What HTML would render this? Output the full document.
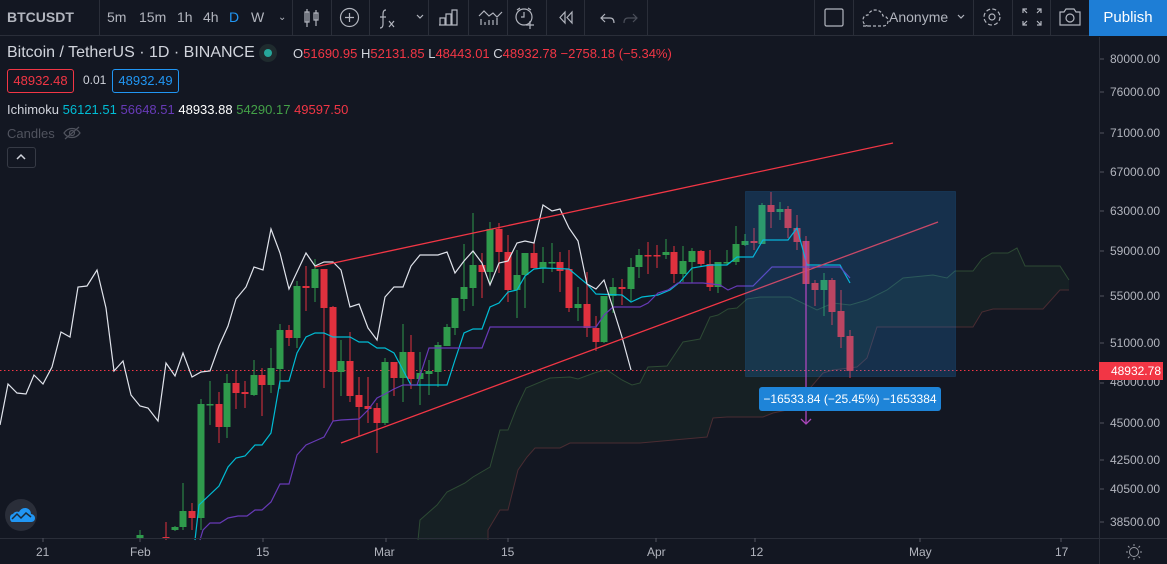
<!DOCTYPE html>
<html><head><meta charset="utf-8"><style>
body{margin:0;width:1167px;height:564px;background:#131722;overflow:hidden;font-family:"Liberation Sans",sans-serif;position:relative}
.tb{position:absolute;left:0;top:0;width:1167px;height:36px;background:#131722;border-bottom:1px solid #2a2e39;box-sizing:border-box}
.t{position:absolute;color:#b2b5be;font-size:14px;top:9px}
.sep{position:absolute;top:0;width:1px;height:36px;background:#2a2e39}
.lg{position:absolute;font-size:13px;white-space:nowrap}
.ax{position:absolute;font-size:12px;color:#b2b5be}
</style></head><body>
<svg width="1167" height="564" style="position:absolute;left:0;top:0" id="ch">
<rect x="0" y="37" width="1167" height="527" fill="#131722"/>
</svg>
<div class="tb">
<div class="t" style="left:7px;font-weight:bold;font-size:14px">BTCUSDT</div>
<div class="sep" style="left:99px"></div>
<div class="t" style="left:107px">5m</div><div class="t" style="left:139px">15m</div><div class="t" style="left:177px">1h</div><div class="t" style="left:203px">4h</div><div class="t" style="left:229px;color:#2196f3">D</div><div class="t" style="left:251px">W</div>
<div class="t" style="left:278px;font-size:10px;top:12px">&#8964;</div>
<div class="sep" style="left:292px"></div><div class="sep" style="left:331px"></div><div class="sep" style="left:369px"></div><div class="sep" style="left:428px"></div><div class="sep" style="left:468px"></div><div class="sep" style="left:507px"></div><div class="sep" style="left:546px"></div><div class="sep" style="left:584px"></div><div class="sep" style="left:647px"></div>
<div class="sep" style="left:814px"></div><div class="sep" style="left:853px"></div><div class="sep" style="left:973px"></div><div class="sep" style="left:1012px"></div><div class="sep" style="left:1050px"></div>
<svg width="1167" height="36" style="position:absolute;left:0;top:0" fill="none" stroke="#b2b5be" stroke-width="1.2">
<path d="M307 9v18M305 12h4v10h-4zM316 10v16M314 13h4v7h-4z"/>
<circle cx="349.5" cy="17.5" r="9"/><path d="M345 17.5h9M349.5 13v9"/>
<path d="M386 10c-3 0-3 3-3 5v9c0 3-1 4-3 4M380 17h6M389 21l5 6M394 21l-5 6"/>
<path d="M417 15l3 3 3-3"/>
<path d="M439 25h18M440 18h5v7h-5zM446 14h5v11h-5zM452 10h5v15h-5z"/>
<path d="M479 16l5-5 5 5 4-3 4 4 5-5M481 19v6M485 22v3M489 20v5M493 20v5M497 18v7"/>
<circle cx="524" cy="17" r="8"/><path d="M524 12v5h-3M517 10l3-2M531 10l-3-2M530 21v8M526 25h8"/>
<path d="M565 12l-5 5.5 5 5.5zM572 12l-5 5.5 5 5.5z"/>
<path d="M605 14l-4 4 4 4M601 18h9c3 0 4 2 4 5" /><path d="M633 14l4 4-4 4M637 18h-9c-3 0-4 2-4 5" stroke="#4a4e59"/>
<rect x="825" y="9" width="18" height="17" rx="1.5"/>
<path d="M863 26h20c3 0 5-2 5-5s-2-5-5-5c-1-4-4-6-8-6-3 0-6 2-7 5-3 0-5 2-5 5s2 6 5 6" stroke-dasharray="3 2"/>
<path d="M958 15l3 3 3-3"/>
<circle cx="992" cy="17" r="3"/><circle cx="992" cy="17" r="8" stroke-dasharray="4 2.3"/>
<path d="M1023 13v-4h4M1023 9l4 4M1041 13v-4h-4M1041 9l-4 4M1023 21v4h4M1023 25l4-4M1041 21v4h-4M1041 25l-4-4"/>
<path d="M1060 12h4l2-3h8l2 3h4v13h-20z"/><circle cx="1070" cy="18" r="4"/>
</svg>
<div class="t" style="left:889px;top:9px">Anonyme</div>
<div style="position:absolute;left:1089px;top:0;width:78px;height:36px;background:#1e7ed6;color:#fff;font-size:15px;text-align:center;line-height:36px">Publish</div>
</div>
<div class="lg" style="left:7px;top:44px;font-size:16px;color:#d1d4dc">Bitcoin / TetherUS · 1D · BINANCE</div>
<div style="position:absolute;left:259px;top:44px;width:18px;height:18px;border-radius:9px;background:#1f2b2e"></div>
<div style="position:absolute;left:264px;top:49px;width:8px;height:8px;border-radius:4px;background:#26a69a"></div>
<div class="lg" style="left:293px;top:46px;color:#d1d4dc">O<span style="color:#f23645">51690.95</span> H<span style="color:#f23645">52131.85</span> L<span style="color:#f23645">48443.01</span> C<span style="color:#f23645">48932.78 −2758.18 (−5.34%)</span></div>
<div class="lg" style="left:7px;top:69px;width:65px;height:22px;border:1px solid #f23645;border-radius:3px;color:#f23645;text-align:center;line-height:22px">48932.48</div>
<div class="lg" style="left:83px;top:73px;color:#d1d4dc;font-size:12px">0.01</div>
<div class="lg" style="left:112px;top:69px;width:65px;height:22px;border:1px solid #2196f3;border-radius:3px;color:#2196f3;text-align:center;line-height:22px">48932.49</div>
<div class="lg" style="left:7px;top:102px;color:#d1d4dc">Ichimoku <span style="color:#00bcd4">56121.51</span> <span style="color:#673ab7">56648.51</span> <span style="color:#fff">48933.88</span> <span style="color:#43a047">54290.17</span> <span style="color:#f23645">49597.50</span></div>
<div class="lg" style="left:7px;top:126px;color:#50535e">Candles</div>
<svg width="20" height="14" style="position:absolute;left:62px;top:126px" fill="none" stroke="#50535e" stroke-width="1.2"><path d="M2 7c4-6 12-6 16 0c-4 6-12 6-16 0z"/><circle cx="10" cy="7" r="2.5"/><path d="M3 13L17 1"/></svg>
<div style="position:absolute;left:7px;top:147px;width:27px;height:19px;border:1px solid #363a45;border-radius:3px"></div>
<svg width="12" height="8" style="position:absolute;left:15px;top:153px" fill="none" stroke="#d1d4dc" stroke-width="1.5"><path d="M2 6l4-4 4 4"/></svg>
<div class="ax" style="left:1110px;top:52px">80000.00</div><div class="ax" style="left:1110px;top:85px">76000.00</div><div class="ax" style="left:1110px;top:126px">71000.00</div><div class="ax" style="left:1110px;top:165px">67000.00</div><div class="ax" style="left:1110px;top:204px">63000.00</div><div class="ax" style="left:1110px;top:244px">59000.00</div><div class="ax" style="left:1110px;top:289px">55000.00</div><div class="ax" style="left:1110px;top:336px">51000.00</div><div class="ax" style="left:1110px;top:375px">48000.00</div><div class="ax" style="left:1110px;top:416px">45000.00</div><div class="ax" style="left:1110px;top:453px">42500.00</div><div class="ax" style="left:1110px;top:482px">40500.00</div><div class="ax" style="left:1110px;top:515px">38500.00</div>
<div style="position:absolute;left:1099px;top:362px;width:64px;height:18px;background:#f23645;color:#fff;font-size:12px;line-height:18px;text-align:right;padding-right:2px;box-sizing:border-box">48932.78</div>
<div class="ax" style="left:36px;top:545px">21</div><div class="ax" style="left:130px;top:545px">Feb</div><div class="ax" style="left:256px;top:545px">15</div><div class="ax" style="left:374px;top:545px">Mar</div><div class="ax" style="left:501px;top:545px">15</div><div class="ax" style="left:647px;top:545px">Apr</div><div class="ax" style="left:750px;top:545px">12</div><div class="ax" style="left:909px;top:545px">May</div><div class="ax" style="left:1055px;top:545px">17</div>
<div style="position:absolute;left:759px;top:387px;width:182px;height:24px;background:#1e84d8;border-radius:3px;color:#fff;font-size:12px;line-height:24px;text-align:center">−16533.84 (−25.45%) −1653384</div>
<script>
var s=document.getElementById('ch'),ns='http://www.w3.org/2000/svg',h='';
function pl(p,c,w,ex){return '<polyline fill="none" stroke="'+c+'" stroke-width="'+(w||1.2)+'" '+(ex||'')+' points="'+p+'"/>';}
var A="418,540 420,520 437,505 447,492 465,483 473,477 490,467 500,430 508,430 517,407 526,388 550,378 570,377 578,379 597,372 607,370 622,380 632,385 640,383 648,367 667,366 683,342 700,339 710,317 718,315 728,309 737,308 747,299 760,297 790,297 817,310 833,303 850,305 867,300 887,290 903,278 933,275 947,278 955,271 973,271 982,259 992,253 1008,253 1017,248 1025,266 1060,266 1069,280";
var B="488,540 488,530 500,510 508,510 518,470 527,457 535,448 560,448 570,443 640,443 707,437 713,418 727,417 763,417 773,413 787,410 800,400 823,373 833,370 857,367 867,358 877,327 973,327 982,312 993,309 1043,309 1060,290 1069,290";
var bp=B.split(' ').reverse().join(' ');
h+='<polygon fill="rgba(67,160,71,0.07)" points="'+A+' '+bp+'"/>';
h+=pl(A,'#2d4a34',1)+pl(B,'#4a2c32',1);
// dotted price line
h+='<line x1="0" y1="370.5" x2="1099" y2="370.5" stroke="#f23645" stroke-dasharray="1.5 2.5"/>';
var C=[[140,538,535,530,540,1],[166,538,537,522,540,0],[175,530,527,526,531,1],[183,527,511,483,530,1],[192,511,518,503,530,0],[201,518,404,399,530,1],[210,404,405,381,425,1],[219,404,427,392,443,0],[227,427,383,374,438,1],[236,383,393,370,409,0],[245,392,394,381,408,0],[254,395,375,360,396,1],[262,375,385,368,416,0],[271,385,368,348,393,1],[280,369,330,324,389,1],[289,330,338,325,346,0],[297,338,286,281,348,1],[306,286,288,266,311,0],[315,288,269,259,302,1],[324,269,308,269,388,0],[333,307,372,306,421,0],[341,372,361,340,396,1],[350,361,396,332,402,0],[359,395,407,377,436,0],[368,406,409,377,423,0],[377,408,423,403,453,0],[385,423,362,358,425,1],[394,362,378,362,396,0],[403,378,352,324,402,1],[411,352,379,335,389,0],[420,379,373,352,405,1],[429,374,371,360,395,1],[438,372,345,342,387,1],[447,346,327,324,335,1],[455,328,298,298,335,1],[464,299,287,244,311,1],[473,288,265,213,306,1],[482,265,272,253,298,0],[490,272,229,222,283,1],[499,229,252,223,273,0],[508,252,290,235,302,0],[517,290,275,250,318,1],[525,275,253,253,308,1],[534,253,268,243,268,0],[543,268,262,247,283,1],[552,262,263,243,272,1],[560,262,271,252,292,0],[569,269,308,250,312,0],[578,308,304,287,321,1],[587,304,328,272,337,0],[596,328,342,316,351,0],[604,342,296,296,343,1],[613,296,287,278,313,1],[622,287,289,279,305,0],[631,289,267,258,301,1],[639,267,255,249,278,1],[648,255,256,242,274,0],[657,255,256,245,268,0],[666,255,252,239,259,1],[674,252,274,246,283,0],[683,274,261,246,282,1],[692,262,251,248,283,1],[701,251,264,250,267,0],[710,264,287,250,291,0],[718,287,262,262,293,1],[727,263,262,250,265,1],[736,262,244,226,265,1],[745,245,241,234,246,1],[754,241,243,228,250,0],[762,244,205,203,244,1],[771,205,212,192,228,0],[780,212,209,202,220,1],[788,209,228,206,238,0],[797,228,242,215,250,0],[806,241,284,236,284,0],[815,283,290,280,306,0],[824,290,280,273,316,1],[832,280,312,278,325,0],[841,311,337,290,348,0],[850,336,371,330,378,0]];
C.forEach(function(c){var col=c[5]?'#2f9a4c':'#e0313e';var t=Math.min(c[1],c[2]),b=Math.max(c[1],c[2]);if(b-t<1.5)b=t+1.5;
h+='<line x1="'+c[0]+'" x2="'+c[0]+'" y1="'+c[3]+'" y2="'+c[4]+'" stroke="'+col+'"/><rect x="'+(c[0]-3.5)+'" y="'+t+'" width="7" height="'+(b-t)+'" fill="'+col+'"/>';});
h+=pl("195,540 199,505 219,486 228,467 236,458 245,456 255,445 262,445 271,433 280,381 289,381 297,353 306,337 315,333 324,333 333,337 350,337 359,342 368,342 377,348 385,348 394,353 403,370 411,385 447,385 455,360 464,333 473,329 482,329 490,307 499,303 508,292 517,290 525,276 534,269 543,268 569,269 587,284 596,294 622,295 631,302 642,297 658,295 670,290 680,282 692,268 710,265 727,265 737,257 753,257 763,240 788,240 797,228 807,265 840,265 850,283",'#00bcd4');
h+=pl("200,540 203,530 210,523 220,523 228,518 238,516 247,516 255,510 262,510 271,502 280,484 289,484 297,455 306,445 315,441 324,437 333,421 341,420 359,419 368,410 377,398 385,394 394,389 403,385 417,385 429,348 482,348 490,327 596,327 604,315 613,307 640,307 648,303 658,293 668,290 678,283 703,283 720,285 728,290 737,286 753,286 772,267 840,267 850,278",'#673ab7');
h+=pl("0,425 8,384 17,393 26,394 34,375 43,384 52,367 61,332 70,337 78,287 87,286 97,270 106,308 114,371 123,361 131,395 140,406 148,408 158,421 166,363 175,376 183,353 192,377 201,372 210,371 219,346 228,326 236,299 246,287 254,267 263,270 271,229 280,253 289,289 297,272 306,253 315,266 324,262 333,262 341,270 350,307 359,304 368,328 377,340 385,297 394,287 403,287 411,266 420,255 438,255 447,252 455,273 464,261 473,251 482,263 490,285 499,263 508,261 517,243 525,241 534,243 543,205 552,211 560,209 569,228 578,241 587,284 596,289 604,280 613,308 622,337 631,370",'#e0e3eb');
h+='<line x1="315" y1="267" x2="893" y2="143" stroke="#f23645" stroke-width="1.3"/><line x1="341" y1="443" x2="938" y2="222" stroke="#f23645" stroke-width="1.3"/>';
h+='<rect x="745.5" y="191.5" width="210" height="185" fill="rgba(33,150,243,0.2)" stroke="rgba(33,150,243,0.15)"/>';
h+='<line x1="806" y1="241" x2="806" y2="424" stroke="#ab47bc" stroke-width="1.3"/><path d="M801 419l5 5 5-5" fill="none" stroke="#ab47bc" stroke-width="1.3"/>';
h+='<line x1="1099.5" y1="37" x2="1099.5" y2="564" stroke="#2a2e39"/><line x1="0" y1="538.5" x2="1167" y2="538.5" stroke="#2a2e39"/>';
[59,92,133,172,211,251,296,343,383,423,460,489,522].forEach(function(y){h+='<line x1="1100" x2="1104" y1="'+y+'" y2="'+y+'" stroke="#50535e"/>';});
h+='<line x1="1099" x2="1104" y1="370.5" y2="370.5" stroke="#fff"/>';
[43,140,263,386,508,656,755,920,1061].forEach(function(x){h+='<line x1="'+x+'" x2="'+x+'" y1="538" y2="542" stroke="#50535e"/>';});
h+='<circle cx="1134" cy="552" r="4.5" fill="none" stroke="#9598a1"/><path d="M1134 544v2M1134 558v2M1126 552h2M1140 552h2M1128 546l1.5 1.5M1138.5 556.5l1.5 1.5M1140 546l-1.5 1.5M1129.5 556.5l-1.5 1.5" stroke="#9598a1"/>';
h+='<circle cx="21" cy="515" r="16" fill="#2a2e39"/><path d="M12 522h19c3 0 4-2 4-4s-2-4-4-4c0-4-3-6-6-6s-5 2-6 4c-2-1-5 0-6 2-2 0-3 2-3 4s1 4 2 4z" fill="#2196f3"/><path d="M12 519l5-5 4 4 5-5 5 4" fill="none" stroke="#1a2b3a" stroke-width="1.5"/>';
s.insertAdjacentHTML('beforeend',h);
</script>
</body></html>
